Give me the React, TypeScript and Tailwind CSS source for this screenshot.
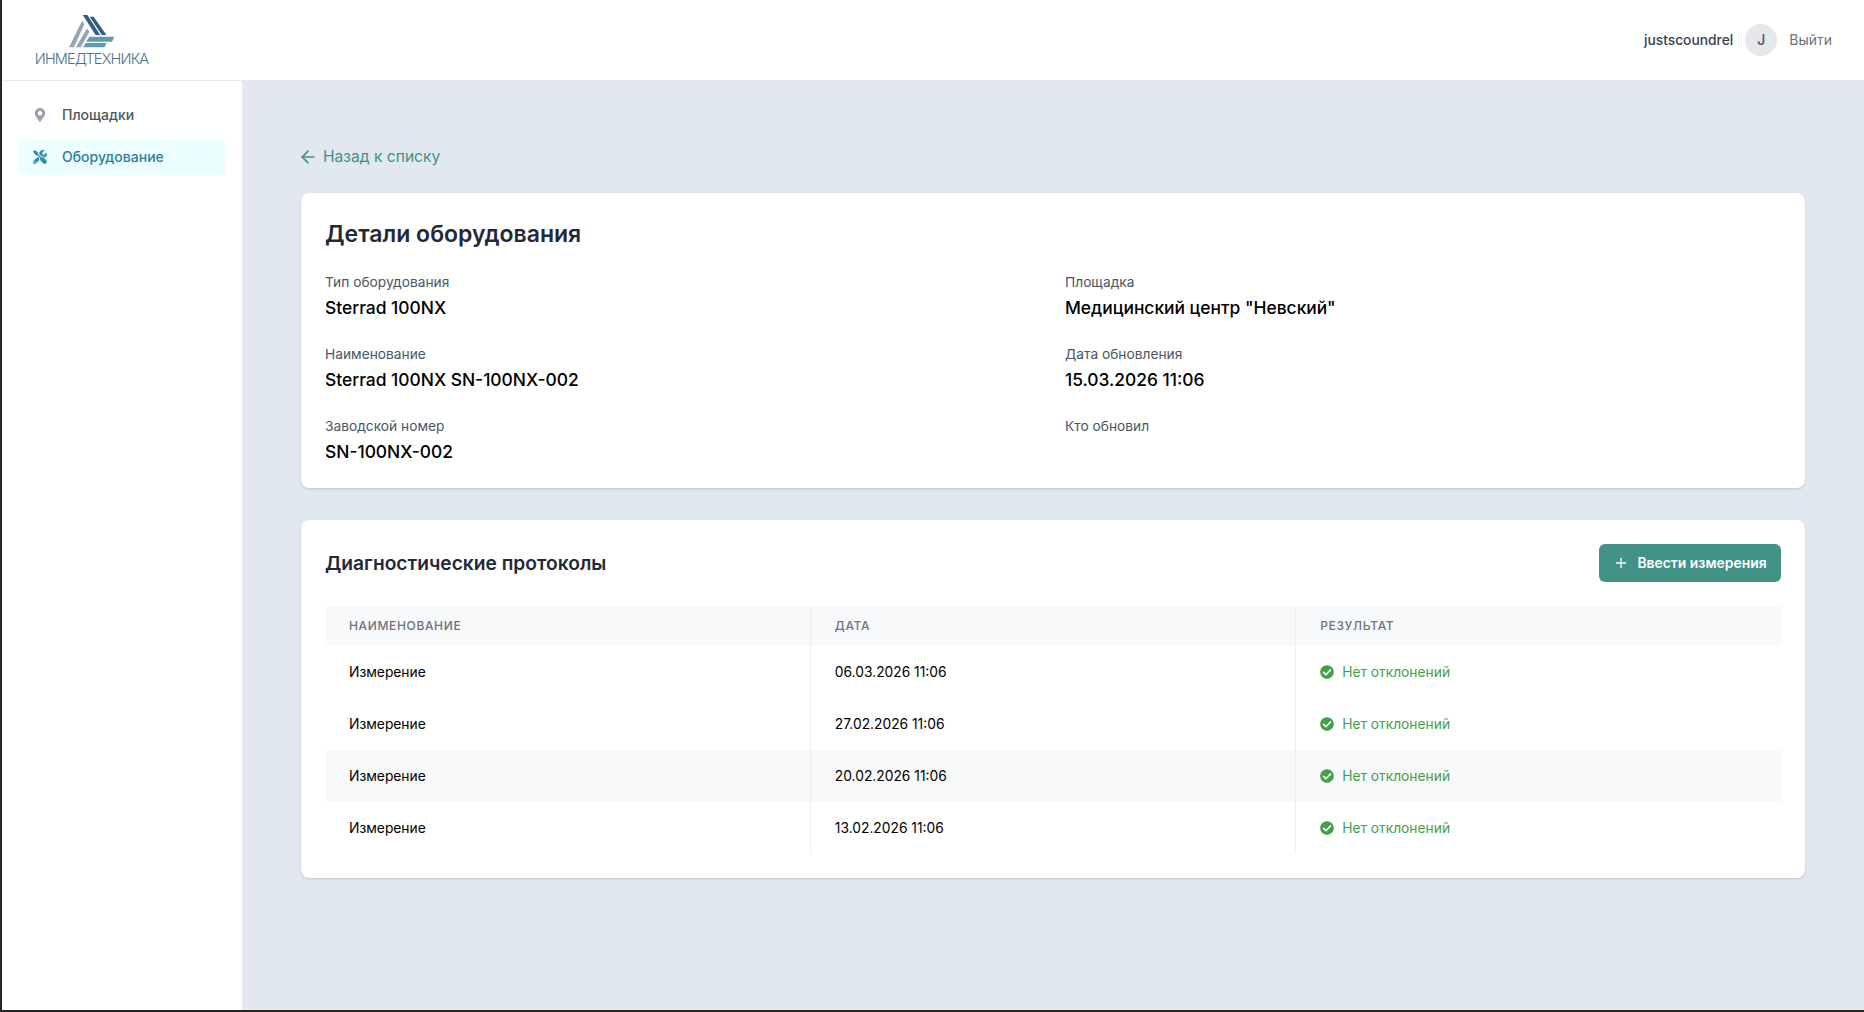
import { ArrowLeft, Plus } from 'lucide-react'
import { FaCheckCircle, FaMapMarkerAlt, FaTools } from 'react-icons/fa'

const font = { fontFamily: 'Inter, "Noto Sans", sans-serif' }

const details = [
  { label: 'Тип оборудования', value: 'Sterrad 100NX' },
  { label: 'Площадка', value: 'Медицинский центр "Невский"' },
  { label: 'Наименование', value: 'Sterrad 100NX SN-100NX-002' },
  { label: 'Дата обновления', value: '15.03.2026 11:06' },
  { label: 'Заводской номер', value: 'SN-100NX-002' },
  { label: 'Кто обновил', value: '' },
]

const rows = [
  { date: '06.03.2026 11:06', striped: false },
  { date: '27.02.2026 11:06', striped: false },
  { date: '20.02.2026 11:06', striped: true },
  { date: '13.02.2026 11:06', striped: false },
]

function Logo() {
  return (
    <div className="flex w-[113px] flex-col items-center">
      <svg viewBox="207 39 140 100" className="h-[33px] w-[46px]">
        <polygon points="249,39 263,39 302,100 288,100" fill="#2f5f7c" />
        <polygon points="270,44 282,44 321,100 307,100" fill="#2f5f7c" />
        <polygon points="247,56 254,67 222,137 207,137" fill="#93a6b2" />
        <polygon points="262,79 269,90 243,137 228,137" fill="#93a6b2" />
        <polygon points="269,105 345,105 338,120 259,120" fill="#5b9cae" />
        <polygon points="258,124 322,124 315,137 250,137" fill="#5b9cae" />
      </svg>
      <span className="mt-1 whitespace-nowrap text-[14.5px] leading-[14px] font-light tracking-[-0.8px] text-[#4a7186]">
        ИНМЕДТЕХНИКА
      </span>
    </div>
  )
}

function Header() {
  return (
    <header className="flex h-[81px] shrink-0 items-center justify-between border-b border-[#e5e7eb] bg-white pr-8 pl-[33px]">
      <Logo />
      <div className="flex items-center">
        <span className="text-[13.8px] font-medium text-[#374151]">justscoundrel</span>
        <div className="ml-3 flex h-8 w-8 items-center justify-center rounded-full bg-[#e5e7eb] text-sm font-medium text-[#4b5563]">
          J
        </div>
        <span className="ml-3 text-sm text-[#6b7280]">Выйти</span>
      </div>
    </header>
  )
}

function Sidebar() {
  return (
    <aside className="flex w-[240px] shrink-0 flex-col gap-1.5 bg-white px-4 pt-4">
      <div className="flex h-9 items-center rounded-md px-[15px] text-sm font-medium text-[#4b5563]">
        <FaMapMarkerAlt className="h-[14px] w-[14px] text-[#9ca3af]" />
        <span className="ml-[15px]">Площадки</span>
      </div>
      <div className="flex h-9 items-center rounded-md bg-[#ecfeff] px-[15px] text-sm font-medium text-[#2f7d98]">
        <FaTools className="h-[14px] w-[14px] text-[#2f8fab]" />
        <span className="ml-[15px]">Оборудование</span>
      </div>
    </aside>
  )
}

function DetailsCard() {
  return (
    <section className="rounded-lg bg-white px-6 pt-[25px] pb-5 shadow-[0_1px_3px_rgba(0,0,0,0.1),0_1px_2px_rgba(0,0,0,0.06)]">
      <h2 className="text-[23px] leading-[33px] font-semibold text-[#1f2937]">Детали оборудования</h2>
      <div className="mt-[21px] grid grid-cols-2 gap-x-6 gap-y-[20px]">
        {details.map((item) => (
          <div key={item.label} className="h-[52px]">
            <div className="text-[13.75px] leading-[21px] text-[#4b5563]">{item.label}</div>
            <div className="mt-[1px] text-[17.4px] leading-[27px] font-medium text-black">{item.value}</div>
          </div>
        ))}
      </div>
    </section>
  )
}

function ProtocolsCard() {
  return (
    <section className="mt-8 rounded-lg bg-white p-6 shadow-[0_1px_3px_rgba(0,0,0,0.1),0_1px_2px_rgba(0,0,0,0.06)]">
      <div className="flex h-[38px] items-center justify-between">
        <h2 className="mt-[1px] text-[19.2px] font-semibold text-[#1f2937]">Диагностические протоколы</h2>
        <button className="flex h-[38px] w-[182px] items-center justify-center rounded-md bg-[#429285] text-[13.9px] font-semibold text-white">
          <Plus className="mr-2 h-4 w-4" />
          Ввести измерения
        </button>
      </div>
      <table className="mt-6 w-full table-fixed border-collapse text-[13.8px] text-black">
        <thead>
          <tr className="h-10 bg-[#f8f9fb] text-left text-xs font-medium tracking-[0.65px] text-[#6b7280] uppercase">
            <th className="border-r border-[#eceef1] pl-6 font-medium">Наименование</th>
            <th className="border-r border-[#eceef1] pl-6 font-medium">Дата</th>
            <th className="pl-6 font-medium">Результат</th>
          </tr>
        </thead>
        <tbody>
          {rows.map((row) => (
            <tr key={row.date} className={row.striped ? 'h-[52px] bg-[#f8f9fb]' : 'h-[52px]'}>
              <td className="border-r border-[#eceef1] pl-6">Измерение</td>
              <td className="border-r border-[#eceef1] pl-6">{row.date}</td>
              <td className="pl-6">
                <div className="flex items-center text-[#43a047]">
                  <FaCheckCircle className="h-[14px] w-[14px]" />
                  <span className="ml-2">Нет отклонений</span>
                </div>
              </td>
            </tr>
          ))}
        </tbody>
      </table>
    </section>
  )
}

export default function App() {
  return (
    <div style={font} className="flex h-screen flex-col overflow-hidden border-b-2 border-l-2 border-[#252525] bg-white">
      <Header />
      <div className="flex min-h-0 flex-1">
        <Sidebar />
        <main className="flex-1 bg-[#e1e8ef] px-[59px] pt-[64px]">
          <a className="flex h-6 items-center text-[15.6px] text-[#429285]">
            <ArrowLeft className="mr-[5px] -ml-[3px] h-5 w-5" />
            Назад к списку
          </a>
          <div className="mt-[24px]">
            <DetailsCard />
            <ProtocolsCard />
          </div>
        </main>
      </div>
    </div>
  )
}
